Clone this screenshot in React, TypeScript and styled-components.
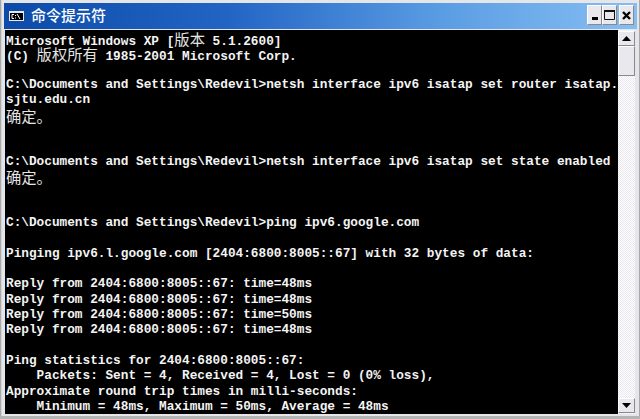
import styled, { createGlobalStyle } from "styled-components";

const Global = createGlobalStyle`
    html, body {
        margin: 0;
        padding: 0;
        background: #d8d8d8;
    }
`;

const Frame = styled.div`
    width: 640px;
    height: 419px;
    box-sizing: border-box;
    padding: 3px 3px 5px 4px;
    background: #e4e6ea;
    box-shadow: inset 0 -3px 0 #b4b4b4, inset 1px 0 0 #a8a8a8, inset 2px 0 0 #d4d4d4, inset -1px 0 0 #a8a8a8;
    display: flex;
    flex-direction: column;
    overflow: hidden;
`;

const TitleBar = styled.div`
    height: 26px;
    flex: none;
    box-sizing: border-box;
    padding: 2px 3px 0 5px;
    display: flex;
    align-items: flex-start;
    background: linear-gradient(90deg, #0c4ba8 0%, #2264c4 35%, #5c9ee4 70%, #86bef2 100%);
`;

const TitleIcon = styled.svg`
    width: 15px;
    height: 10px;
    flex: none;
    margin: 6px 7px 0 0;
`;

const TitleText = styled.span`
    flex: 1;
    color: #fff;
    font: 500 15px/20px "Noto Sans CJK SC", sans-serif;
`;

const WinButton = styled.div<{ $gap?: number }>`
    width: 15px;
    height: 20px;
    margin-left: ${(p) => p.$gap ?? 0}px;
    box-sizing: border-box;
    flex: none;
    background: #e8e8ee;
    border: 1px solid;
    border-color: #fff #8a8a8a #8a8a8a #fff;
    display: flex;
    align-items: center;
    justify-content: center;
`;

const Body = styled.div`
    flex: 1;
    display: flex;
    min-height: 0;
    margin: 1px 2px 0 1px;
`;

const Console = styled.div`
    flex: 1;
    padding: 1px 0 0 1px;
    background: #000;
    color: #f4f4f4;
    font: 700 12.75px "Liberation Mono", monospace;
    overflow: hidden;
`;

const Line = styled.div`
    height: 15.33px;
    line-height: 15.33px;
    white-space: pre;
`;

const Cjk = styled.span`
    font: 400 15.3px/15.33px "Noto Sans CJK SC", sans-serif;
    color: #e4e4e4;
`;

const ScrollBar = styled.div`
    width: 17px;
    flex: none;
    box-sizing: border-box;
    padding: 1px 0;
    display: flex;
    flex-direction: column;
    background: repeating-conic-gradient(#ffffff 0% 25%, #e8e8ee 0% 50%) 0 0 / 2px 2px;
`;

const ArrowButton = styled.div`
    height: 15px;
    flex: none;
    box-sizing: border-box;
    background: #e8e8ee;
    border: 1px solid;
    border-color: #fff #8a8a8a #8a8a8a #fff;
    display: flex;
    align-items: center;
    justify-content: center;
`;

const Thumb = styled.div`
    height: 30px;
    flex: none;
    box-sizing: border-box;
    background: #e8e8ee;
    border: 1px solid;
    border-color: #fff #8a8a8a #8a8a8a #fff;
`;

const Track = styled.div`
    flex: 1;
`;

const Glyph = styled.svg`
    display: block;
`;

export default function App() {
    return <>
        <Global />
        <Frame>
            <TitleBar>
                <TitleIcon viewBox="0 0 15 10">
                    <rect width="15" height="10" fill="#e4e8f4" />
                    <rect x="1" y="2" width="13" height="7" fill="#000" />
                    <path d="M5 3.5 H3 V7.5 H5 M6.5 4 V5 M6.5 6.5 V7.5 M8 3 L11 8" stroke="#fff" fill="none" />
                </TitleIcon>
                <TitleText>命令提示符</TitleText>
                <WinButton>
                    <Glyph width="6" height="14" viewBox="0 0 6 14"><rect y="9" width="6" height="3" fill="#000" /></Glyph>
                </WinButton>
                <WinButton>
                    <Glyph width="11" height="10" viewBox="0 0 11 10"><path d="M.5 1 H10.5 V9.5 H.5 Z" fill="none" stroke="#111" /><rect width="11" height="2" fill="#111" /></Glyph>
                </WinButton>
                <WinButton $gap={2}>
                    <Glyph width="9" height="9" viewBox="0 0 9 9"><path d="M1 1 L8 8 M8 1 L1 8" stroke="#000" strokeWidth="2.4" /></Glyph>
                </WinButton>
            </TitleBar>
            <Body>
                <Console>
                    <Line>Microsoft Windows XP [<Cjk>版本</Cjk> 5.1.2600]</Line>
                    <Line>(C) <Cjk>版权所有</Cjk> 1985-2001 Microsoft Corp.</Line>
                    <Line />
                    <Line>{"C:\\Documents and Settings\\Redevil>netsh interface ipv6 isatap set router isatap."}</Line>
                    <Line>sjtu.edu.cn</Line>
                    <Line><Cjk>确定。</Cjk></Line>
                    <Line />
                    <Line />
                    <Line>{"C:\\Documents and Settings\\Redevil>netsh interface ipv6 isatap set state enabled"}</Line>
                    <Line><Cjk>确定。</Cjk></Line>
                    <Line />
                    <Line />
                    <Line>{"C:\\Documents and Settings\\Redevil>ping ipv6.google.com"}</Line>
                    <Line />
                    <Line>Pinging ipv6.l.google.com [2404:6800:8005::67] with 32 bytes of data:</Line>
                    <Line />
                    <Line>Reply from 2404:6800:8005::67: time=48ms</Line>
                    <Line>Reply from 2404:6800:8005::67: time=48ms</Line>
                    <Line>Reply from 2404:6800:8005::67: time=50ms</Line>
                    <Line>Reply from 2404:6800:8005::67: time=48ms</Line>
                    <Line />
                    <Line>Ping statistics for 2404:6800:8005::67:</Line>
                    <Line>{"    Packets: Sent = 4, Received = 4, Lost = 0 (0% loss),"}</Line>
                    <Line>Approximate round trip times in milli-seconds:</Line>
                    <Line>{"    Minimum = 48ms, Maximum = 50ms, Average = 48ms"}</Line>
                </Console>
                <ScrollBar>
                    <ArrowButton>
                        <Glyph width="9" height="5" viewBox="0 0 9 5"><path d="M4.5 0 L9 5 H0 Z" fill="#000" /></Glyph>
                    </ArrowButton>
                    <Thumb />
                    <Track />
                    <ArrowButton>
                        <Glyph width="9" height="5" viewBox="0 0 9 5"><path d="M0 0 H9 L4.5 5 Z" fill="#000" /></Glyph>
                    </ArrowButton>
                </ScrollBar>
            </Body>
        </Frame>
    </>;
}
